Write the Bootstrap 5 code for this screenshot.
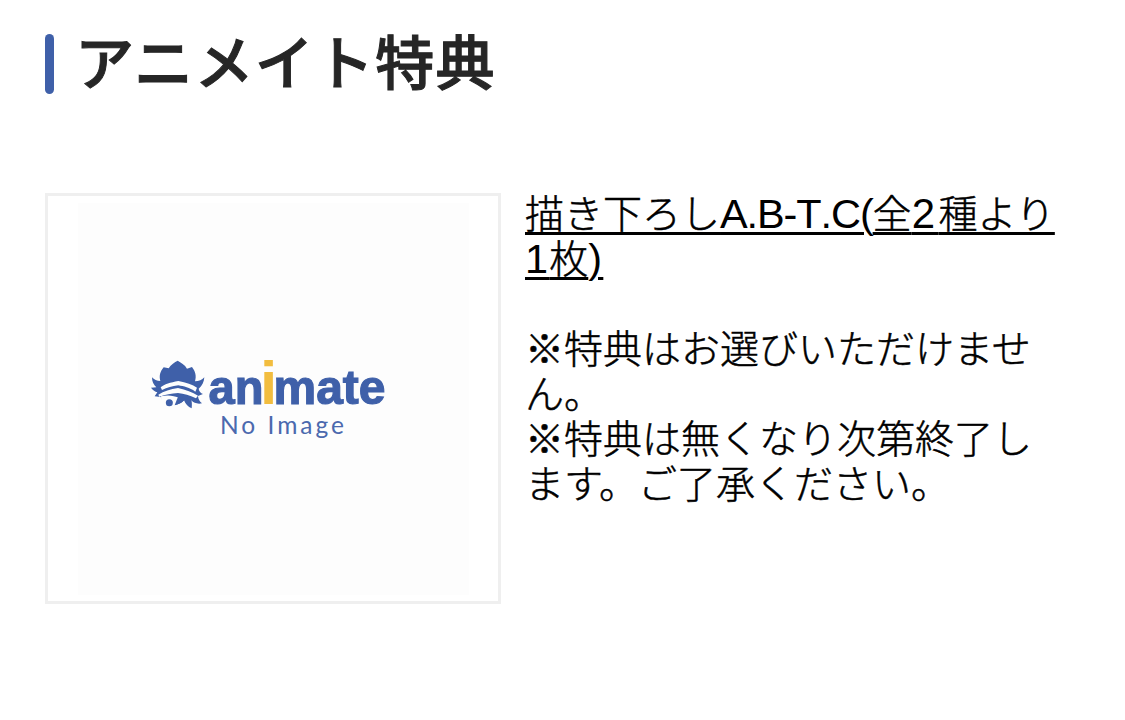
<!DOCTYPE html>
<html lang="ja">
<head>
  <meta charset="UTF-8" />
  <meta name="viewport" content="width=device-width, initial-scale=1" />
  <title>アニメイト特典</title>
  <link href="https://cdn.jsdelivr.net/npm/bootstrap@5.3.0/dist/css/bootstrap.min.css" rel="stylesheet"/>
  <style>
    body { font-family: "Noto Sans CJK JP", sans-serif; color: #000; }
    .page { padding: 34px 45px 0; }
    .section-title { height: 60px; gap: 21px; margin-bottom: 99px; }
    .title-bar { width: 9px; height: 60px; border-radius: 5px; background: #3f60a9; }
    .section-title h2 { font-size: 59px; line-height: 60px; letter-spacing: 1.3px; font-weight: 500; -webkit-text-stroke: 1px #262626; color: #262626; padding-bottom: 9px; }
    .bonus { gap: 24px; }
    .thumb { width: 456px; height: 411px; border: 3px solid #efefef; }
    .thumb svg { width: 391px; height: 392px; background: #fdfdfd; }
    .detail { width: 540px; margin-top: -4px; font-size: 39px; line-height: 45px; font-weight: 300; -webkit-text-stroke: .5px #000; }
    .bonus-name { color: #000; text-decoration-thickness: 3px; text-underline-offset: 4px; }
    .bonus-name:hover { color: #000; }
    .latin { font-family: "Liberation Sans", sans-serif; font-size: 41.5px; line-height: 0; letter-spacing: -1.1px; font-kerning: none; -webkit-text-stroke: 0; }
    .digit { letter-spacing: 1.2px; }
    .two { font-size: 42px; letter-spacing: 3.6px; }
    .note { margin: 45px 0 0; }
  </style>
</head>
<body class="bg-white">
  <div class="page">
    <!-- Heading -->
    <div class="section-title d-flex align-items-center">
      <span class="title-bar"></span>
      <h2 class="mb-0 text-nowrap">アニメイト特典</h2>
    </div>

    <!-- Bonus -->
    <div class="bonus d-flex align-items-start">
      <div class="thumb d-flex align-items-center justify-content-center flex-shrink-0">
        <svg viewBox="78 203 391 392" role="img" aria-label="animate No Image">
          <g transform="translate(140 350) scale(.33333)">
            <path fill="#3f60a9" d="M113 32C104 37 93 43 86 55L71 52C60 65 57 78 61 93C51 93 42 89 36 82C36 96 41 104 49 112L33 113C39 121 45 125 52 127L44 139L62 141C66 148 68 154 66 161C72 160 75 155 78 150L113 152L104 165C117 164 126 158 132 151C136 162 144 171 155 175C156 165 156 157 154 151C161 159 173 163 186 160C178 154 175 147 174 138L189 132C182 129 177 123 176 116C187 107 192 96 193 82C186 90 177 94 165 94C170 78 166 64 156 51L141 56C135 44 122 37 113 32Z"/>
            <path fill="#fdfdfd" d="M62 112C73 102 91 98 115 93C138 98 158 104 171 113L166 125C148 112 132 109 115 106C96 109 82 112 66 120Z"/>
            <path fill="#fdfdfd" d="M55 134C72 123 91 118 114 114C138 119 157 127 174 137L168 145C148 136 133 131 114 129C94 131 76 134 58 140Z"/>
            <path fill="#fdfdfd" d="M63 139C83 134 99 136 120 144L130 151C119 149 112 155 104 166L76 169L64 162Z"/>
            <circle cx="88" cy="158" r="10.5" fill="#3f60a9"/>
            <path fill="#3f60a9" d="M114 140L134 143L132 151C124 160 115 164 104 166Z"/>
          </g>
          <g font-family="'Liberation Sans', sans-serif" font-weight="700" fill="#3f60a9" stroke="#3f60a9" stroke-width="1.2">
            <text x="208.5" y="404" font-size="49" textLength="55" lengthAdjust="spacingAndGlyphs">an</text>
            <text x="260" y="404" font-size="62" fill="#f2bd3f" stroke="none">i</text>
            <text x="273.5" y="404" font-size="49" textLength="112" lengthAdjust="spacingAndGlyphs">mate</text>
          </g>
          <text x="220" y="433.5" font-family="Lato, sans-serif" font-size="24.5" fill="#4b69ae" textLength="124">No Image</text>
        </svg>
      </div>
      <div class="detail text-nowrap">
        <a href="#" class="bonus-name">描き下ろし<span class="latin">A.B-T.C(</span>全<span class="latin two">2</span>種より<br><span class="latin digit">1</span>枚<span class="latin digit">)</span></a>
        <p class="note">※特典はお選びいただけませ<br>ん。<br>※特典は無くなり次第終了し<br>ます。ご了承ください。</p>
      </div>
    </div>
  </div>
  <script src="https://cdn.jsdelivr.net/npm/bootstrap@5.3.0/dist/js/bootstrap.bundle.min.js"></script>
</body>
</html>
